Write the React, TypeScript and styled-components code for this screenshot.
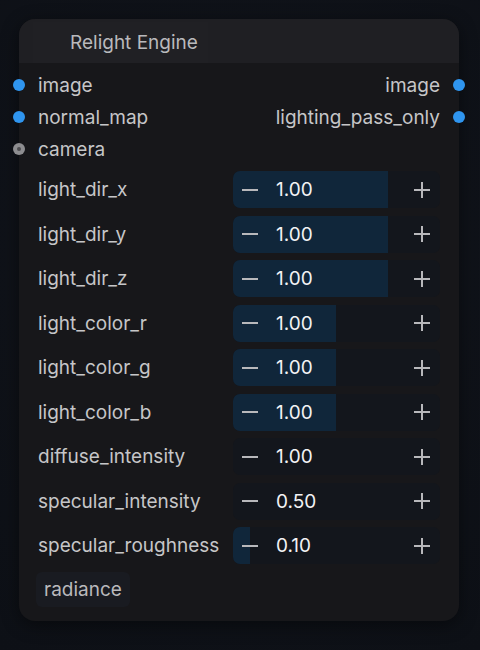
import styled, { createGlobalStyle } from "styled-components";

const Global = createGlobalStyle`
  html, body {
    margin: 0;
    padding: 0;
    background: #0e1118;
  }
  body {
    font-family: Inter, "Noto Sans", sans-serif;
  }
`;

type Widget = { name: string; value: string; fill: number };

const inputs = [
  { name: "image", kind: "image" },
  { name: "normal_map", kind: "image" },
  { name: "camera", kind: "camera" },
];
const outputs = ["image", "lighting_pass_only"];

const widgets: Widget[] = [
  { name: "light_dir_x", value: "1.00", fill: 155 },
  { name: "light_dir_y", value: "1.00", fill: 155 },
  { name: "light_dir_z", value: "1.00", fill: 155 },
  { name: "light_color_r", value: "1.00", fill: 103 },
  { name: "light_color_g", value: "1.00", fill: 103 },
  { name: "light_color_b", value: "1.00", fill: 103 },
  { name: "diffuse_intensity", value: "1.00", fill: 0 },
  { name: "specular_intensity", value: "0.50", fill: 0 },
  { name: "specular_roughness", value: "0.10", fill: 17 },
];

const Page = styled.div`
  width: 480px;
  height: 650px;
  padding: 19px;
  box-sizing: border-box;
  background: radial-gradient(circle at 50% 40%, #11141b 0%, #0d1016 100%);
`;

const Node = styled.div`
  width: 440px;
  background: #17171a;
  border-radius: 16px;
  box-shadow: 0 4px 18px rgba(0, 0, 0, 0.45);
  padding-bottom: 14px;
`;

const Header = styled.div`
  height: 44px;
  background: #1f1f23;
  border-radius: 16px 16px 0 0;
  display: flex;
  align-items: center;
  padding-left: 14px;
`;

const Title = styled.div`
  height: 41px;
  margin-top: 3px;
  display: flex;
  align-items: center;
  padding: 0 10px 0 37px;
  background: #202024;
  color: #b9b9bc;
  font-size: 19px;
`;

const Slots = styled.div`
  display: grid;
  grid-template-columns: 1fr auto;
  padding-top: 6px;
`;

const SlotCol = styled.div<{ $right?: boolean }>`
  display: flex;
  flex-direction: column;
  align-items: ${(p) => (p.$right ? "flex-end" : "flex-start")};
`;

const Slot = styled.div<{ $right?: boolean }>`
  height: 32px;
  display: flex;
  align-items: center;
  gap: 13px;
  flex-direction: ${(p) => (p.$right ? "row-reverse" : "row")};
  margin: ${(p) => (p.$right ? "0 -6px 0 0" : "0 0 0 -6px")};
  color: #c6c6c8;
  font-size: 19px;
`;

const Dot = styled.span<{ $kind: string }>`
  width: 12px;
  height: 12px;
  border-radius: 50%;
  flex: none;
  display: flex;
  align-items: center;
  justify-content: center;
  background: ${(p) => (p.$kind === "camera" ? "#8d8d90" : "#2f95ef")};
  &::after {
    content: "";
    display: ${(p) => (p.$kind === "camera" ? "block" : "none")};
    width: 4px;
    height: 4px;
    border-radius: 50%;
    background: #4c4c50;
  }
`;

const Widgets = styled.div`
  display: flex;
  flex-direction: column;
  gap: 7.5px;
  padding: 6px 19px 0 19px;
`;

const Row = styled.div`
  display: flex;
  align-items: center;
  height: 37px;
`;

const Label = styled.div`
  width: 195px;
  color: #c6c6c8;
  font-size: 19px;
  white-space: nowrap;
`;

const Number = styled.div`
  position: relative;
  flex: 1;
  height: 37px;
  border-radius: 7px;
  background: #13161c;
  overflow: hidden;
  display: flex;
  align-items: center;
`;

const Fill = styled.div`
  position: absolute;
  left: 0;
  top: 0;
  bottom: 0;
  background: #10263a;
`;

const Step = styled.span`
  position: relative;
  width: 16px;
  height: 16px;
  flex: none;
  &::before,
  &::after {
    content: "";
    position: absolute;
    background: #b8b8bb;
    left: 0;
    top: 7px;
    width: 16px;
    height: 2px;
  }
`;

const Minus = styled(Step)`
  margin: 0 18px 0 9px;
  &::after {
    display: none;
  }
`;

const Plus = styled(Step)`
  margin: 0 10px 0 auto;
  &::after {
    left: 7px;
    top: 0;
    width: 2px;
    height: 16px;
  }
`;

const Value = styled.span`
  position: relative;
  color: #f2f2f4;
  font-size: 19px;
`;

const Chip = styled.div`
  display: inline-flex;
  align-items: center;
  height: 35px;
  margin: 8px 0 0 17px;
  padding: 0 8px 0 8px;
  border-radius: 6px;
  background: #191b21;
  color: #b9b9bc;
  font-size: 19px;
`;

export default function App() {
  return (
    <Page>
      <Global />
      <Node>
        <Header>
          <Title>Relight Engine</Title>
        </Header>
        <Slots>
          <SlotCol>
            {inputs.map((s) => (
              <Slot key={s.name}>
                <Dot $kind={s.kind} />
                {s.name}
              </Slot>
            ))}
          </SlotCol>
          <SlotCol $right>
            {outputs.map((o) => (
              <Slot $right key={o}>
                <Dot $kind="image" />
                {o}
              </Slot>
            ))}
          </SlotCol>
        </Slots>
        <Widgets>
          {widgets.map((w) => (
            <Row key={w.name}>
              <Label>{w.name}</Label>
              <Number>
                {w.fill > 0 && <Fill style={{ width: w.fill }} />}
                <Minus />
                <Value>{w.value}</Value>
                <Plus />
              </Number>
            </Row>
          ))}
        </Widgets>
        <Chip>radiance</Chip>
      </Node>
    </Page>
  );
}
